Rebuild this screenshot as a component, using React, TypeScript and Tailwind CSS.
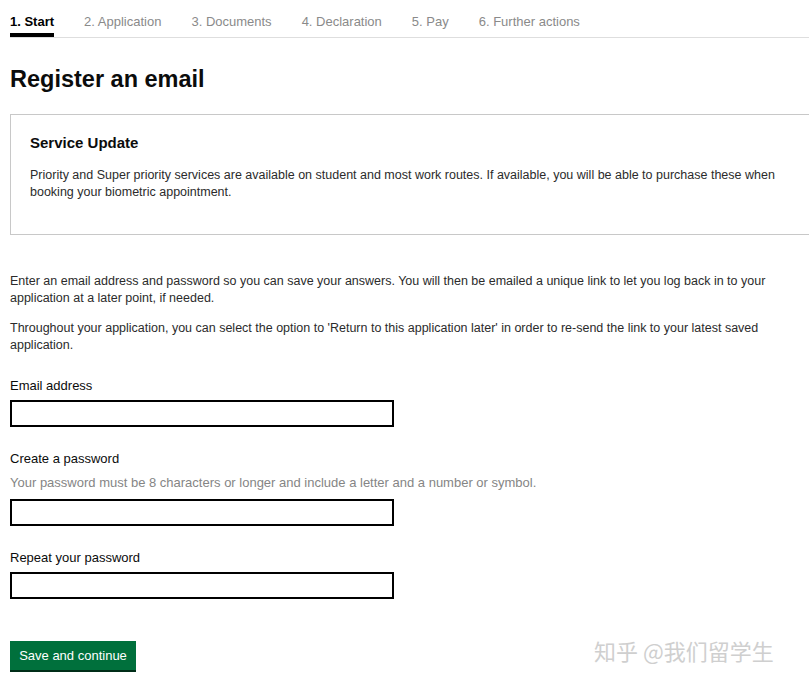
const tabs = ['1. Start', '2. Application', '3. Documents', '4. Declaration', '5. Pay', '6. Further actions']

function Field({ label, hint }: { label: string; hint?: string }) {
  return (
    <div className="flex flex-col">
      <label className="text-[13px] leading-[17px] text-[#0b0c0c]">{label}</label>
      {hint && <p className="mt-[7px] text-[13px] leading-[17px] text-[#858585]">{hint}</p>}
      <input className={`${hint ? 'mt-[8px]' : 'mt-[6px]'} h-[27px] w-[384px] border-2 border-black bg-white outline-none`} />
    </div>
  )
}

export default function App() {
  return (
    <div className="relative min-h-[681px] overflow-hidden bg-white pl-[10px] text-[#0b0c0c]" style={{ fontFamily: '"Liberation Sans", Arial, sans-serif' }}>
      {/* Step tabs */}
      <nav className="flex h-[38px] items-end border-b border-[#dedede]">
        {tabs.map((t, i) => (
          <div
            key={t}
            className={
              i === 0
                ? 'mr-[30px] border-b-[4px] border-black pb-[3px] text-[13px] font-bold leading-[17px] text-black'
                : 'mr-[30px] pb-[7px] text-[13px] leading-[17px] text-[#8a8a8a]'
            }
          >
            {t}
          </div>
        ))}
      </nav>

      <h1 className="mt-[26px] text-[23.5px] font-bold leading-[30px] text-[#0b0c0c]">Register an email</h1>

      {/* Service update box */}
      <section className="-mr-px mt-[20px] h-[121px] border border-[#c8c8c8] px-[19px] pt-[18px]">
        <h2 className="text-[15px] font-bold leading-[20px]">Service Update</h2>
        <p className="mt-[14px] text-[12.5px] leading-[17px] text-[#2b2b2b]">
          Priority and Super priority services are available on student and most work routes. If available, you will be able to purchase these when booking your biometric appointment.
        </p>
      </section>

      <div className="mt-[38px] w-[770px] space-y-[13px] text-[12.5px] leading-[17px] text-[#2b2b2b]">
        <p>
          Enter an email address and password so you can save your answers. You will then be emailed a unique link to let you log back in to your application at a later point, if needed.
        </p>
        <p>
          Throughout your application, you can select the option to 'Return to this application later' in order to re-send the link to your latest saved application.
        </p>
      </div>

      <div className="mt-[23px] flex flex-col gap-[23px]">
        <Field label="Email address" />
        <Field label="Create a password" hint="Your password must be 8 characters or longer and include a letter and a number or symbol." />
        <Field label="Repeat your password" />
      </div>

      <button className="mt-[42px] h-[29px] w-[126px] bg-[#00703c] text-[13px] text-white shadow-[0_2px_0_#002d18]">
        Save and continue
      </button>

      <div
        className="absolute left-[594px] top-[634px] text-[22px] text-[#cfcfcf]"
        style={{ fontFamily: '"Noto Sans CJK SC", sans-serif' }}
      >
        知乎 @我们留学生
      </div>
    </div>
  )
}
